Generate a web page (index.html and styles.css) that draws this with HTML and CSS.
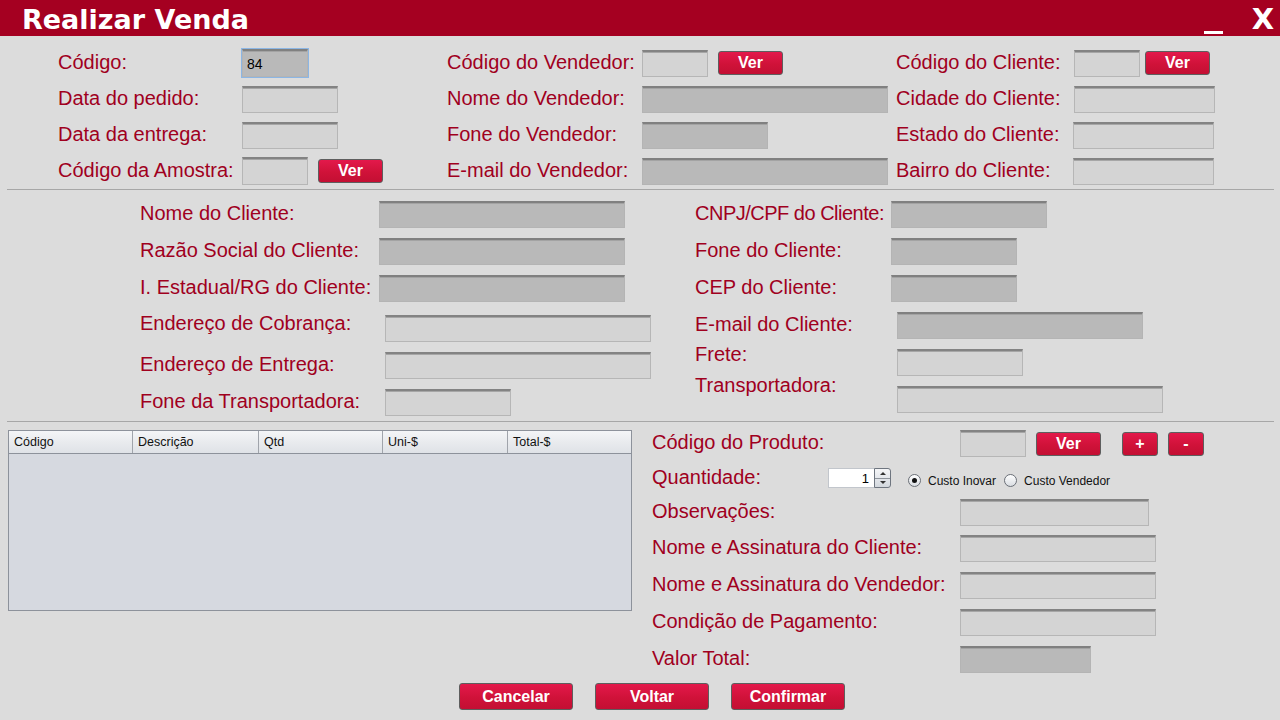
FILE: index.html
```html
<!DOCTYPE html>
<html lang="pt-BR">
<head>
<meta charset="utf-8">
<title>Realizar Venda</title>
<link rel="stylesheet" href="styles.css">
</head>
<body>
<div class="window">
  <header class="titlebar">
    <h1 class="title">Realizar Venda</h1>
    <div class="win-ctrls">
      <span class="min"></span>
      <span class="close">X</span>
    </div>
  </header>

  <section class="top">
    <div class="group g1">
      <div class="row"><label class="lbl">Código:</label><span class="focus-ring"><input class="fld dark w66 code" type="text" value="84"></span></div>
      <div class="row"><label class="lbl">Data do pedido:</label><input class="fld w96" type="text"></div>
      <div class="row"><label class="lbl">Data da entrega:</label><input class="fld w96" type="text"></div>
      <div class="row"><label class="lbl">Código da Amostra:</label><input class="fld w66 h28" type="text"><button class="btn ver gap10">Ver</button></div>
    </div>
    <div class="group g2">
      <div class="row"><label class="lbl">Código do Vendedor:</label><input class="fld w66" type="text"><button class="btn ver gap10">Ver</button></div>
      <div class="row"><label class="lbl">Nome do Vendedor:</label><input class="fld dark w246" type="text"></div>
      <div class="row"><label class="lbl">Fone do Vendedor:</label><input class="fld dark w126" type="text"></div>
      <div class="row"><label class="lbl">E-mail do Vendedor:</label><input class="fld dark w246" type="text"></div>
    </div>
    <div class="group g3">
      <div class="row"><label class="lbl">Código do Cliente:</label><input class="fld w66" type="text"><button class="btn ver gap5">Ver</button></div>
      <div class="row"><label class="lbl">Cidade do Cliente:</label><input class="fld w141" type="text"></div>
      <div class="row"><label class="lbl">Estado do Cliente:</label><input class="fld w141 nudge-l" type="text"></div>
      <div class="row"><label class="lbl">Bairro do Cliente:</label><input class="fld w141 nudge-l" type="text"></div>
    </div>
  </section>

  <hr class="sep">

  <section class="mid">
    <div class="col mleft">
      <div class="row"><label class="lbl lw239">Nome do Cliente:</label><input class="fld dark w246" type="text"></div>
      <div class="row"><label class="lbl lw239">Razão Social do Cliente:</label><input class="fld dark w246" type="text"></div>
      <div class="row"><label class="lbl lw239">I. Estadual/RG do Cliente:</label><input class="fld dark w246" type="text"></div>
      <div class="row gap-above"><label class="lbl lw245 up4">Endereço de Cobrança:</label><input class="fld w266" type="text"></div>
      <div class="row"><label class="lbl lw245">Endereço de Entrega:</label><input class="fld w266" type="text"></div>
      <div class="row"><label class="lbl lw245">Fone da Transportadora:</label><input class="fld w126" type="text"></div>
    </div>
    <div class="col mright">
      <div class="row"><label class="lbl lw196 tight">CNPJ/CPF do Cliente:</label><input class="fld dark w156" type="text"></div>
      <div class="row"><label class="lbl lw196">Fone do Cliente:</label><input class="fld dark w126" type="text"></div>
      <div class="row"><label class="lbl lw196">CEP do Cliente:</label><input class="fld dark w126" type="text"></div>
      <div class="row"><label class="lbl lw202">E-mail do Cliente:</label><input class="fld dark w246" type="text"></div>
      <div class="row"><label class="lbl lw202 up7">Frete:</label><input class="fld w126" type="text"></div>
      <div class="row"><label class="lbl lw202 up13">Transportadora:</label><input class="fld w266" type="text"></div>
    </div>
  </section>

  <hr class="sep">

  <section class="bottom">
    <div class="grid">
      <div class="grid-head">
        <span>Código</span><span>Descrição</span><span>Qtd</span><span>Uni-$</span><span>Total-$</span>
      </div>
    </div>
    <div class="form">
      <div class="row r37"><label class="lbl lw308">Código do Produto:</label><input class="fld w66" type="text"><button class="btn ver gap10">Ver</button><button class="btn sq gap21">+</button><button class="btn sq gap10">-</button></div>
      <div class="row r32"><label class="lbl lw176">Quantidade:</label>
        <div class="spinner"><input class="spin-val" type="text" value="1"><span class="spin-btns"><span class="arrow up"></span><span class="arrow down"></span></span></div>
        <span class="radio on"></span><span class="rlbl">Custo Inovar</span>
        <span class="radio"></span><span class="rlbl">Custo Vendedor</span>
      </div>
      <div class="row r36"><label class="lbl lw308">Observações:</label><input class="fld w189" type="text"></div>
      <div class="row"><label class="lbl lw308">Nome e Assinatura do Cliente:</label><input class="fld w196" type="text"></div>
      <div class="row"><label class="lbl lw308">Nome e Assinatura do Vendedor:</label><input class="fld w196" type="text"></div>
      <div class="row"><label class="lbl lw308">Condição de Pagamento:</label><input class="fld w196" type="text"></div>
      <div class="row"><label class="lbl lw308">Valor Total:</label><input class="fld dark w131" type="text"></div>
    </div>
  </section>

  <footer class="actions">
    <button class="btn big">Cancelar</button>
    <button class="btn big">Voltar</button>
    <button class="btn big">Confirmar</button>
  </footer>
</div>
</body>
</html>
```

FILE: styles.css
```css
* { box-sizing: border-box; margin: 0; padding: 0; }

body {
  width: 1280px;
  height: 720px;
  background: #dcdcdc;
  font-family: "Liberation Sans", Arial, sans-serif;
  overflow: hidden;
}

.window { width: 1280px; height: 720px; }

/* ---------- title bar ---------- */
.titlebar {
  height: 36px;
  background: #a50021;
  display: flex;
  justify-content: space-between;
  padding: 0 7px 0 22px;
}
.title {
  font: bold 27px/33px "DejaVu Sans", sans-serif;
  color: #fff;
  padding-top: 3px;
}
.win-ctrls { display: flex; align-items: flex-start; gap: 29px; }
.min { width: 19px; height: 3px; background: #fff; margin-top: 31px; }
.close {
  font: bold 29px/1 "DejaVu Sans", sans-serif;
  color: #fff;
  margin-top: 5px;
  margin-right: -1px;
}

/* ---------- common ---------- */
.row { display: flex; align-items: center; height: 37px; }
.lbl {
  flex: none;
  font-size: 20px;
  color: #a0001e;
  white-space: nowrap;
  margin-bottom: 2px;
}
.tight { letter-spacing: -0.5px; }

.fld {
  flex: none;
  appearance: none;
  outline: none;
  height: 27px;
  background: #d4d4d4;
  border: 1px solid #b6b6b6;
  border-top: 2px solid #838383;
  box-shadow: inset 0 1px 0 #a6a6a6;
  font: 14px "Liberation Sans", Arial, sans-serif;
  color: #000;
  padding: 0 4px;
}
.fld.dark {
  background: #b9b9b9;
  border-color: #b4b4b4;
  border-top-color: #808080;
  box-shadow: inset 0 1px 0 #a3a3a3;
}
.h28 { height: 28px; }
.nudge-l { margin-left: -1px; }

.w66 { width: 66px; }
.w96 { width: 96px; }
.w126 { width: 126px; }
.w131 { width: 131px; }
.w141 { width: 141px; }
.w156 { width: 156px; }
.w189 { width: 189px; }
.w196 { width: 196px; }
.w246 { width: 246px; }
.w266 { width: 266px; }

.focus-ring {
  display: flex;
  border: 1px solid #8cb6e4;
  margin-left: -1px;
}
.code { height: 28px; padding-left: 4px; }

.btn {
  flex: none;
  appearance: none;
  border: 1px solid #5e5e5e;
  border-radius: 3px;
  background: linear-gradient(#e3194b, #d01239 55%, #c30f33);
  color: #fff;
  font: bold 16px "Liberation Sans", Arial, sans-serif;
  display: flex;
  align-items: center;
  justify-content: center;
  height: 24px;
}
.ver { width: 65px; }
.sq { width: 36px; }
.gap5 { margin-left: 5px; }
.gap10 { margin-left: 10px; }
.gap21 { margin-left: 21px; }

/* ---------- top section ---------- */
.top {
  display: flex;
  padding: 8px 0 0 58px;
  height: 153px;
}
.group {
  display: grid;
  grid-template-rows: 38px 35px 36px 36px;
}
.group .row { height: auto; }
.g1 { width: 389px; }
.g1 .lbl { width: 184px; }
.g2 { width: 449px; }
.g2 .lbl { width: 195px; }
.g3 .lbl { width: 178px; }

.sep {
  border: 0;
  height: 1px;
  background: #a7a7a7;
  margin: 0 6px 0 7px;
}

/* ---------- middle section ---------- */
.mid {
  display: flex;
  padding: 6px 0 0 140px;
  height: 231px;
}
.col { display: flex; flex-direction: column; }
.mleft { width: 555px; }
.gap-above { margin-top: 3px; }
.lw176 { width: 176px; }
.lw196 { width: 196px; }
.lw202 { width: 202px; }
.lw239 { width: 239px; }
.lw245 { width: 245px; }
.lw308 { width: 308px; }
.lbl.up4 { margin-bottom: 10px; }
.lbl.up7 { margin-bottom: 16px; }
.lbl.up13 { margin-bottom: 28px; }

/* ---------- bottom section ---------- */
.bottom {
  display: flex;
  padding-top: 3px;
  height: 256px;
}
.grid {
  width: 624px;
  height: 181px;
  margin: 5px 0 0 8px;
  border: 1px solid #8d929b;
  background: #d6d9e0;
}
.grid-head {
  display: grid;
  grid-template-columns: 124px 126px 124px 125px 1fr;
  height: 23px;
  background: linear-gradient(#f4f5f7, #e9ebee 50%, #dfe2e7);
  border-bottom: 1px solid #8d929b;
}
.grid-head span {
  border-right: 1px solid #a0a4ab;
  font: 12.5px "Liberation Sans", Arial, sans-serif;
  color: #111;
  padding-left: 5px;
  display: flex;
  align-items: center;
}
.grid-head span:last-child { border-right: 0; }

.form { margin-left: 20px; display: flex; flex-direction: column; }
.r37 { height: 37px; }
.r32 { height: 32px; }
.r36 { height: 36px; }

.spinner {
  display: flex;
  height: 20px;
  width: 63px;
  flex: none;
}
.spin-val {
  appearance: none;
  outline: none;
  width: 46px;
  height: 20px;
  border: 1px solid #c2c6cc;
  border-right: 0;
  background: #fff;
  font: 13px "Liberation Sans", Arial, sans-serif;
  text-align: right;
  padding-right: 5px;
  color: #000;
}
.spin-btns {
  width: 17px;
  display: flex;
  flex-direction: column;
  border: 1px solid #6f7680;
  border-radius: 0 3px 3px 0;
  background: linear-gradient(#f5f6f8, #d3d8de);
}
.arrow {
  flex: 1;
  display: flex;
  align-items: center;
  justify-content: center;
}
.arrow.up { border-bottom: 1px solid #8e949c; }
.arrow::before {
  content: "";
  border-left: 3px solid transparent;
  border-right: 3px solid transparent;
}
.arrow.up::before { border-bottom: 3px solid #333; }
.arrow.down::before { border-top: 3px solid #333; }

.radio {
  flex: none;
  width: 13px;
  height: 13px;
  border-radius: 50%;
  border: 1px solid #6a6f77;
  background: linear-gradient(#ffffff, #d9dde2);
  margin-left: 17px;
  margin-top: 5px;
  display: flex;
  align-items: center;
  justify-content: center;
}
.radio.on::after {
  content: "";
  width: 5px;
  height: 5px;
  border-radius: 50%;
  background: #111;
}
.radio + .rlbl { margin-left: 7px; }
.rlbl + .radio { margin-left: 8px; }
.rlbl {
  font: 12px "Liberation Sans", Arial, sans-serif;
  color: #111;
  margin-top: 5px;
}

/* ---------- actions ---------- */
.actions {
  display: flex;
  gap: 22px;
  padding: 5px 0 0 459px;
}
.big { width: 114px; height: 27px; }
```
